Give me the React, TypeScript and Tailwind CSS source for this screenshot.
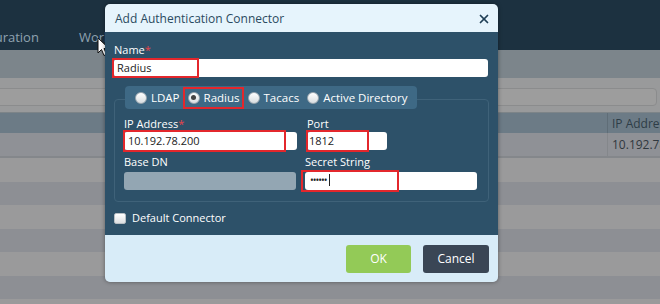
import { X } from 'lucide-react';

const font = { fontFamily: '"Open Sans", "Noto Sans", sans-serif' };

function Radio({ label, checked }: { label: string; checked?: boolean }) {
  return (
    <label className="flex items-center gap-[4px] whitespace-nowrap text-[11.5px] text-white">
      <span className="flex h-[12px] w-[12px] shrink-0 items-center justify-center rounded-full border border-[#9aa7b0] bg-gradient-to-b from-white to-[#d8dde0]">
        {checked && <span className="h-[5px] w-[5px] rounded-full bg-[#444]" />}
      </span>
      {label}
    </label>
  );
}

function Mark() {
  return <span className="pointer-events-none absolute inset-0 border-2 border-[#e3272c]" />;
}

export default function App() {
  const rows = Array.from({ length: 7 });
  return (
    <div className="relative h-[304px] w-[660px] overflow-hidden bg-[#999a9b]" style={font}>
      {/* page behind the dialog */}
      <div className="flex h-[50px] items-end gap-[40px] whitespace-nowrap bg-[#1c3140] pb-[3px] text-[13px] text-[#8fa2b0]">
        <span className="-ml-[44px]">Configuration</span>
        <span>Workflows</span>
      </div>
      <div className="h-[28px] bg-[#7c858b]" />
      <div className="h-[34px] px-0 pt-[10px]">
        <div className="-ml-[4px] h-[18px] w-[661px] rounded-[4px] border border-[#8b8c8d] bg-[#9d9d9d]" />
      </div>
      <div className="flex h-[21px] whitespace-nowrap border-t border-[#7d8488] bg-[#6c7b86] text-[12px] text-[#2e3d47]">
        <div className="w-[607px] shrink-0" />
        <div className="border-l border-[#5f6d77] pl-[4px] leading-[21px]">IP Address</div>
      </div>
      <div className="flex h-[25px] whitespace-nowrap border-b-2 border-[#84878b] bg-[#8f9196] text-[12px] text-[#30383e]">
        <div className="w-[607px] shrink-0" />
        <div className="border-l border-[#84878b] pl-[4px] leading-[23px]">10.192.78.200</div>
      </div>
      {rows.map((_, i) => (
        <div key={i} className={i % 2 === 0 ? 'h-[23.5px] bg-[#9a9a9b]' : 'h-[23.5px] bg-[#8d8f94]'} />
      ))}

      {/* cursor */}
      <svg className="absolute left-[97px] top-[37px]" width="13" height="20" viewBox="0 0 13 20">
        <path d="M1 1 L1 16 L4.5 12.5 L7 18.5 L9.5 17.5 L7 11.5 L12 11.5 Z" fill="#fff" stroke="#111" strokeWidth="1" strokeLinejoin="round" />
      </svg>

      {/* dialog */}
      <div className="absolute left-[105px] top-[4px] flex w-[393px] flex-col overflow-hidden rounded-[5px] shadow-[0_0_4px_rgba(0,0,0,0.4)]">
        <div className="flex h-[28px] items-center justify-between bg-[#e6f4fc] pl-[10px] pr-[7px] pt-[1px] text-[12px] text-[#2a4a60]">
          <span>Add Authentication Connector</span>
          <X size={14} strokeWidth={3} className="text-[#1f3f55]" />
        </div>

        <div className="flex h-[203px] flex-col bg-[#2d5169] px-[9px] pt-[10px] text-[11px] text-white">
          <div className="leading-[16px]">
            Name<span className="text-[#e8434a]">*</span>
          </div>
          <div className="relative mt-[1px] h-[18px] w-[374px] rounded-[3px] bg-white">
            <span className="absolute left-[3px] top-0 leading-[18px] text-[#222]">Radius</span>
            <span className="absolute -left-[2px] -top-[1px] h-[20px] w-[87px]">
              <Mark />
            </span>
          </div>

          <div className="relative mt-[22px] h-[103px] w-[375px] rounded-[4px] border border-[#3f6279] px-[9px]">
            <div className="absolute -top-[14px] left-[10px] flex h-[23px] w-[292px] items-center gap-[8px] rounded-[4px] bg-[#3e6985] pl-[10px]">
              <Radio label="LDAP" />
              <span className="relative flex h-[22px] items-center">
                <Radio label="Radius" checked />
                <span className="absolute -left-[5px] -right-[4px] top-0 h-[22px]">
                  <Mark />
                </span>
              </span>
              <Radio label="Tacacs" />
              <Radio label="Active Directory" />
            </div>

            <div className="mt-[16px] flex gap-[10px]">
              <div className="flex flex-col">
                <div className="leading-[15px]">
                  IP Address<span className="text-[#e8434a]">*</span>
                </div>
                <div className="relative mt-[1px] h-[18px] w-[173px] rounded-[3px] bg-white">
                  <span className="absolute left-[4px] leading-[18px] text-[#222]">10.192.78.200</span>
                  <span className="absolute -left-[1px] -top-[2px] h-[22px] w-[163px]">
                    <Mark />
                  </span>
                </div>
              </div>
              <div className="flex flex-col">
                <div className="leading-[15px]">Port</div>
                <div className="relative mt-[1px] h-[18px] w-[80px] rounded-[3px] bg-white">
                  <span className="absolute left-[2px] leading-[18px] text-[#222]">1812</span>
                  <span className="absolute -left-[1px] -top-[2px] h-[22px] w-[63px]">
                    <Mark />
                  </span>
                </div>
              </div>
            </div>

            <div className="mt-[4px] flex gap-[9px]">
              <div className="flex flex-col">
                <div className="leading-[15px]">Base DN</div>
                <div className="mt-[3px] h-[18px] w-[172px] rounded-[3px] bg-[#93a6b3]" />
              </div>
              <div className="flex flex-col">
                <div className="leading-[15px]">Secret String</div>
                <div className="relative mt-[3px] h-[18px] w-[172px] rounded-[3px] bg-white">
                  <span className="absolute left-[5px] top-[-1px] flex h-[18px] items-center text-[10px] tracking-[-1px] text-[#222]">
                    ••••••
                    <span className="ml-[2px] h-[12px] w-[1px] bg-[#222]" />
                  </span>
                  <span className="absolute -left-[4px] -top-[2px] h-[22px] w-[98px]">
                    <Mark />
                  </span>
                </div>
              </div>
            </div>
          </div>

          <label className="mt-[8px] flex items-center gap-[6px]">
            <span className="h-[11px] w-[12px] rounded-[2px] border border-[#b8bfc4] bg-gradient-to-b from-white to-[#dcdfe1]" />
            Default Connector
          </label>
        </div>

        <div className="flex h-[47px] items-center justify-end gap-[12px] bg-[#d8ecf8] pr-[9px]">
          <button className="h-[28px] w-[65px] rounded-[3px] bg-[#93ca57] text-[12px] text-white">OK</button>
          <button className="h-[28px] w-[66px] rounded-[3px] bg-[#3a4655] text-[12px] text-white">Cancel</button>
        </div>
      </div>
    </div>
  );
}
